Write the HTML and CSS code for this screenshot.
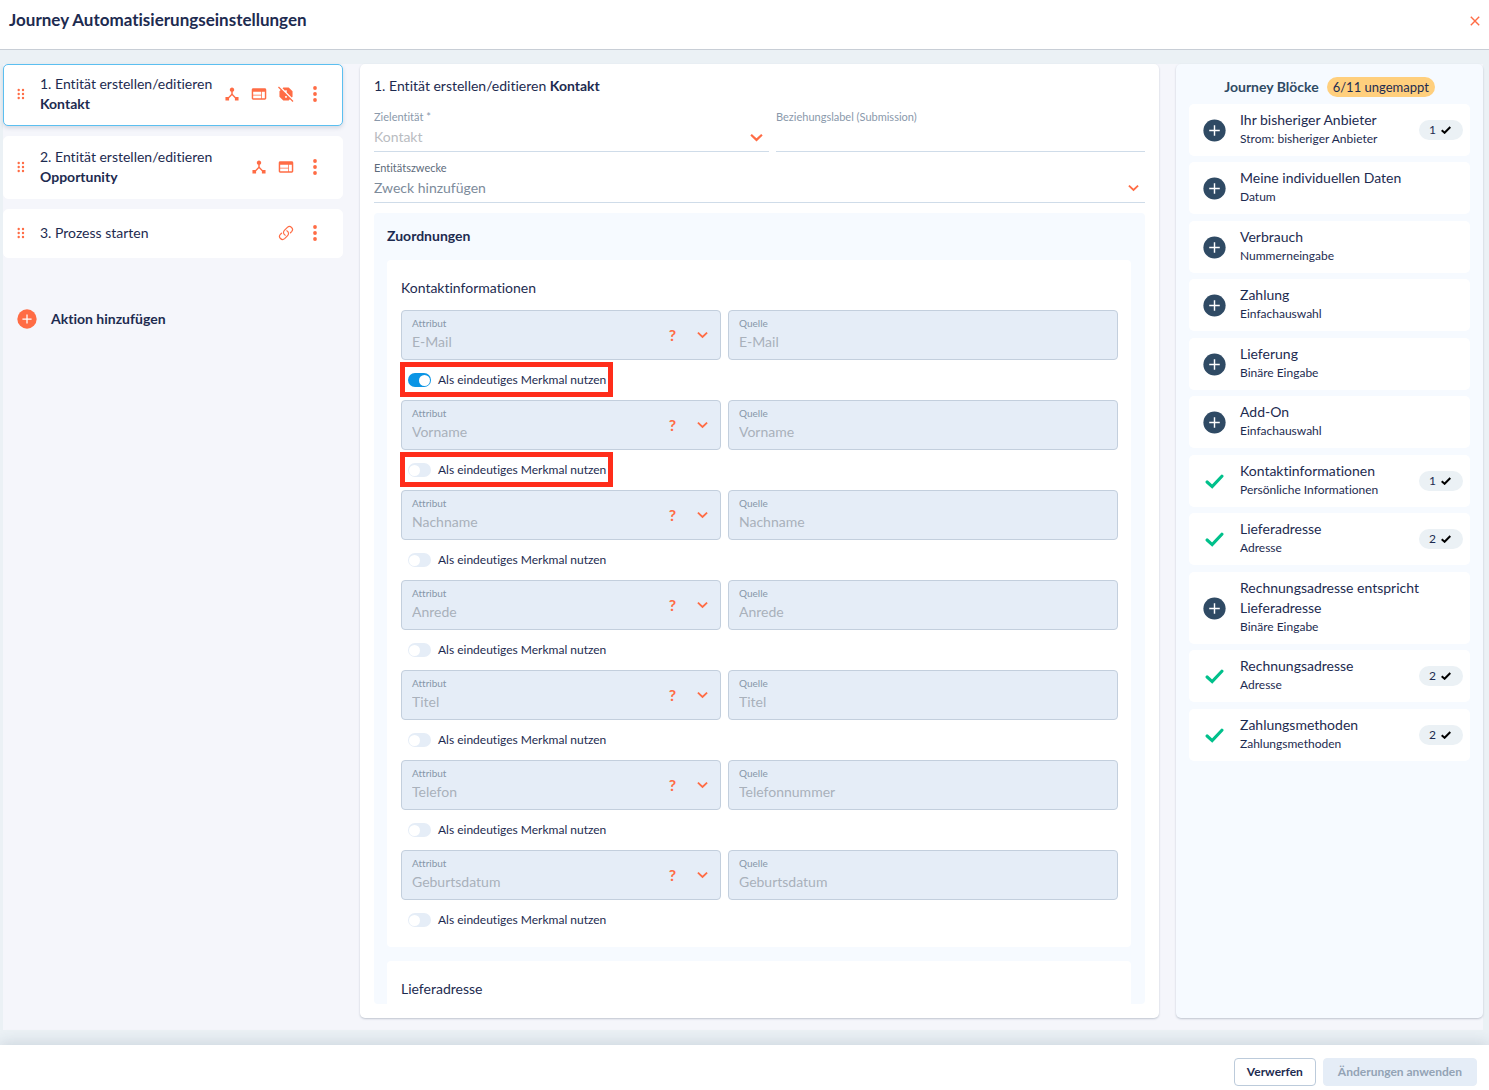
FILE: index.html
```html
<!DOCTYPE html>
<html lang="de">
<head>
<meta charset="utf-8">
<meta name="viewport" content="width=device-width, initial-scale=1">
<title>Journey Automatisierungseinstellungen</title>
<link rel="stylesheet" href="styles.css">
</head>
<body>
<svg class="sprite" aria-hidden="true">
  <symbol id="i-drag" viewBox="0 0 8 12"><g fill="currentColor"><circle cx="1.7" cy="2" r="1.2"/><circle cx="6" cy="2" r="1.2"/><circle cx="1.7" cy="6" r="1.2"/><circle cx="6" cy="6" r="1.2"/><circle cx="1.7" cy="10" r="1.2"/><circle cx="6" cy="10" r="1.2"/></g></symbol>
  <symbol id="i-dots" viewBox="0 0 4 16"><g fill="currentColor"><circle cx="2" cy="2" r="1.9"/><circle cx="2" cy="8" r="1.9"/><circle cx="2" cy="14" r="1.9"/></g></symbol>
  <symbol id="i-hub" viewBox="1 1 22 22"><path fill="currentColor" d="M17 16l-4-4V8.82C14.16 8.4 15 7.3 15 6c0-1.66-1.34-3-3-3S9 4.34 9 6c0 1.3.84 2.4 2 2.82V12l-4 4H3v5h5v-3.05l4-4.2 4 4.2V21h5v-5h-4z"/></symbol>
  <symbol id="i-web" viewBox="1 1 22 22"><path fill="currentColor" d="M20 4H4c-1.1 0-2 .9-2 2v12c0 1.1.9 2 2 2h16c1.1 0 2-.9 2-2V6c0-1.1-.9-2-2-2zm-5 14H4v-4h11v4zm0-5H4V9h11v4zm5 5h-4V9h4v9z"/></symbol>
  <symbol id="i-off" viewBox="1 1 22 22"><path fill="currentColor" d="M11 7h2v2.92l6.91 6.91 1.09-1.1V8.27L15.73 3H8.27L7.18 4.1 11 7.92V7zM22.27 21.73l-20-20L1 3l3.64 3.63L3 8.27v7.46L8.27 21h7.46l1.64-1.63L21 23l1.27-1.27zM12 17.3c-.72 0-1.3-.58-1.3-1.3s.58-1.3 1.3-1.3 1.3.58 1.3 1.3-.58 1.3-1.3 1.3z"/></symbol>
  <symbol id="i-link" viewBox="0 0 24 24"><path fill="none" stroke="currentColor" stroke-width="1.8" stroke-linecap="round" d="M13.19 8.69a4.5 4.5 0 0 1 1.24 7.24l-4.5 4.5a4.5 4.5 0 0 1-6.36-6.36l1.76-1.76m13.35-.62 1.75-1.76a4.5 4.5 0 0 0-6.36-6.36l-4.5 4.5a4.5 4.5 0 0 0 1.24 7.24"/></symbol>
  <symbol id="i-plus" viewBox="0 0 24 24"><circle cx="12" cy="12" r="11.6" fill="currentColor"/><path stroke="#fff" stroke-width="1.5" fill="none" d="M12 6.5v11M6.5 12h11"/></symbol>
  <symbol id="i-check" viewBox="0 0 18 14"><path fill="none" stroke="currentColor" stroke-width="3" stroke-linecap="round" d="M2 7.5 6.8 11.8 16 2"/></symbol>
  <symbol id="i-tick" viewBox="0 0 10 8"><path fill="none" stroke="currentColor" stroke-width="2" d="M.7 4.3 3.6 6.8 9.3 1"/></symbol>
  <symbol id="i-chevron" viewBox="0 0 12 8"><path fill="none" stroke="currentColor" stroke-width="2" d="M1 1.4 6 6.2 11 1.4"/></symbol>
  <symbol id="i-close" viewBox="0 0 10 10"><path fill="none" stroke="currentColor" stroke-width="1.4" d="M.8.8 9.2 9.2M9.2.8.8 9.2"/></symbol>
</svg>

<header class="topbar">
  <h1>Journey Automatisierungseinstellungen</h1>
  <button class="icon-btn" type="button" aria-label="Schließen"><svg class="close"><use href="#i-close"/></svg></button>
</header>

<main class="stage">
  <div class="columns">
    <nav class="actions" aria-label="Aktionen">
      <article class="action selected">
        <svg class="drag"><use href="#i-drag"/></svg>
        <p>1. Entität erstellen/editieren<br><b>Kontakt</b></p>
        <div class="tools">
          <svg class="tool"><use href="#i-hub"/></svg>
          <svg class="tool"><use href="#i-web"/></svg>
          <svg class="tool"><use href="#i-off"/></svg>
          <button class="icon-btn" type="button" aria-label="Menü"><svg class="dots"><use href="#i-dots"/></svg></button>
        </div>
      </article>
      <article class="action">
        <svg class="drag"><use href="#i-drag"/></svg>
        <p>2. Entität erstellen/editieren<br><b>Opportunity</b></p>
        <div class="tools">
          <svg class="tool"><use href="#i-hub"/></svg>
          <svg class="tool"><use href="#i-web"/></svg>
          <button class="icon-btn" type="button" aria-label="Menü"><svg class="dots"><use href="#i-dots"/></svg></button>
        </div>
      </article>
      <article class="action single">
        <svg class="drag"><use href="#i-drag"/></svg>
        <p>3. Prozess starten</p>
        <div class="tools">
          <svg class="tool"><use href="#i-link"/></svg>
          <button class="icon-btn" type="button" aria-label="Menü"><svg class="dots"><use href="#i-dots"/></svg></button>
        </div>
      </article>
      <button class="add" type="button"><svg class="add-icon"><use href="#i-plus"/></svg>Aktion hinzufügen</button>
    </nav>

    <section class="editor">
      <h2>1. Entität erstellen/editieren <b>Kontakt</b></h2>
      <div class="line-fields">
        <div class="line-field">
          <label for="target">Zielentität *</label>
          <div class="control"><select id="target" disabled><option>Kontakt</option></select><svg class="chevron big"><use href="#i-chevron"/></svg></div>
        </div>
        <div class="line-field">
          <label for="relation">Beziehungslabel (Submission)</label>
          <div class="control"><input id="relation" type="text" disabled></div>
        </div>
        <div class="line-field wide">
          <label for="purpose">Entitätszwecke</label>
          <div class="control"><input id="purpose" type="text" placeholder="Zweck hinzufügen"><svg class="chevron"><use href="#i-chevron"/></svg></div>
        </div>
      </div>

      <div class="mappings">
        <h3>Zuordnungen</h3>
        <div class="group">
          <h4>Kontaktinformationen</h4>
          <div class="map-row">
            <div class="box"><div class="field"><label for="a1">Attribut</label><select id="a1" disabled><option>E-Mail</option></select></div><button class="help" type="button">?</button><svg class="chevron"><use href="#i-chevron"/></svg></div>
            <div class="box"><div class="field"><label for="q1">Quelle</label><input id="q1" type="text" value="E-Mail" disabled></div></div>
          </div>
          <label class="unique marked"><input type="checkbox" role="switch" checked>Als eindeutiges Merkmal nutzen</label>
          <div class="map-row">
            <div class="box"><div class="field"><label for="a2">Attribut</label><select id="a2" disabled><option>Vorname</option></select></div><button class="help" type="button">?</button><svg class="chevron"><use href="#i-chevron"/></svg></div>
            <div class="box"><div class="field"><label for="q2">Quelle</label><input id="q2" type="text" value="Vorname" disabled></div></div>
          </div>
          <label class="unique marked"><input type="checkbox" role="switch">Als eindeutiges Merkmal nutzen</label>
          <div class="map-row">
            <div class="box"><div class="field"><label for="a3">Attribut</label><select id="a3" disabled><option>Nachname</option></select></div><button class="help" type="button">?</button><svg class="chevron"><use href="#i-chevron"/></svg></div>
            <div class="box"><div class="field"><label for="q3">Quelle</label><input id="q3" type="text" value="Nachname" disabled></div></div>
          </div>
          <label class="unique"><input type="checkbox" role="switch">Als eindeutiges Merkmal nutzen</label>
          <div class="map-row">
            <div class="box"><div class="field"><label for="a4">Attribut</label><select id="a4" disabled><option>Anrede</option></select></div><button class="help" type="button">?</button><svg class="chevron"><use href="#i-chevron"/></svg></div>
            <div class="box"><div class="field"><label for="q4">Quelle</label><input id="q4" type="text" value="Anrede" disabled></div></div>
          </div>
          <label class="unique"><input type="checkbox" role="switch">Als eindeutiges Merkmal nutzen</label>
          <div class="map-row">
            <div class="box"><div class="field"><label for="a5">Attribut</label><select id="a5" disabled><option>Titel</option></select></div><button class="help" type="button">?</button><svg class="chevron"><use href="#i-chevron"/></svg></div>
            <div class="box"><div class="field"><label for="q5">Quelle</label><input id="q5" type="text" value="Titel" disabled></div></div>
          </div>
          <label class="unique"><input type="checkbox" role="switch">Als eindeutiges Merkmal nutzen</label>
          <div class="map-row">
            <div class="box"><div class="field"><label for="a6">Attribut</label><select id="a6" disabled><option>Telefon</option></select></div><button class="help" type="button">?</button><svg class="chevron"><use href="#i-chevron"/></svg></div>
            <div class="box"><div class="field"><label for="q6">Quelle</label><input id="q6" type="text" value="Telefonnummer" disabled></div></div>
          </div>
          <label class="unique"><input type="checkbox" role="switch">Als eindeutiges Merkmal nutzen</label>
          <div class="map-row">
            <div class="box"><div class="field"><label for="a7">Attribut</label><select id="a7" disabled><option>Geburtsdatum</option></select></div><button class="help" type="button">?</button><svg class="chevron"><use href="#i-chevron"/></svg></div>
            <div class="box"><div class="field"><label for="q7">Quelle</label><input id="q7" type="text" value="Geburtsdatum" disabled></div></div>
          </div>
          <label class="unique"><input type="checkbox" role="switch">Als eindeutiges Merkmal nutzen</label>
        </div>
        <div class="group">
          <h4>Lieferadresse</h4>
        </div>
      </div>
    </section>

    <aside class="blocks">
      <div class="blocks-head"><h2>Journey Blöcke</h2><span class="badge">6/11 ungemappt</span></div>
      <ul>
        <li><svg class="state"><use href="#i-plus"/></svg><div class="info"><p>Ihr bisheriger Anbieter</p><small>Strom: bisheriger Anbieter</small></div><span class="pill">1<svg class="tick"><use href="#i-tick"/></svg></span></li>
        <li><svg class="state"><use href="#i-plus"/></svg><div class="info"><p>Meine individuellen Daten</p><small>Datum</small></div></li>
        <li><svg class="state"><use href="#i-plus"/></svg><div class="info"><p>Verbrauch</p><small>Nummerneingabe</small></div></li>
        <li><svg class="state"><use href="#i-plus"/></svg><div class="info"><p>Zahlung</p><small>Einfachauswahl</small></div></li>
        <li><svg class="state"><use href="#i-plus"/></svg><div class="info"><p>Lieferung</p><small>Binäre Eingabe</small></div></li>
        <li><svg class="state"><use href="#i-plus"/></svg><div class="info"><p>Add-On</p><small>Einfachauswahl</small></div></li>
        <li><svg class="state done"><use href="#i-check"/></svg><div class="info"><p>Kontaktinformationen</p><small>Persönliche Informationen</small></div><span class="pill">1<svg class="tick"><use href="#i-tick"/></svg></span></li>
        <li><svg class="state done"><use href="#i-check"/></svg><div class="info"><p>Lieferadresse</p><small>Adresse</small></div><span class="pill">2<svg class="tick"><use href="#i-tick"/></svg></span></li>
        <li><svg class="state"><use href="#i-plus"/></svg><div class="info"><p>Rechnungsadresse entspricht Lieferadresse</p><small>Binäre Eingabe</small></div></li>
        <li><svg class="state done"><use href="#i-check"/></svg><div class="info"><p>Rechnungsadresse</p><small>Adresse</small></div><span class="pill">2<svg class="tick"><use href="#i-tick"/></svg></span></li>
        <li><svg class="state done"><use href="#i-check"/></svg><div class="info"><p>Zahlungsmethoden</p><small>Zahlungsmethoden</small></div><span class="pill">2<svg class="tick"><use href="#i-tick"/></svg></span></li>
      </ul>
    </aside>
  </div>
</main>

<footer class="bottombar">
  <button class="btn" type="button">Verwerfen</button>
  <button class="btn primary" type="button" disabled>Änderungen anwenden</button>
</footer>
</body>
</html>
```
FILE: styles.css
```css
:root {
  --navy: #1d2b50;
  --slate: #2f4a64;
  --orange: #ff6c45;
  --field: #e5edf7;
  --line: #c3cfdd;
  --pale: #f6faff;
}

* { box-sizing: border-box; }

body {
  margin: 0;
  height: 100vh;
  display: flex;
  flex-direction: column;
  background: #fff;
  color: var(--navy);
  font: 14px/20px Lato, "Open Sans", sans-serif;
  font-variant-ligatures: none;
}

h1, h2, h3, h4, p, ul { margin: 0; padding: 0; }
button, input, select { font: inherit; color: inherit; margin: 0; }
svg { display: block; flex: none; }
.sprite { position: absolute; width: 0; height: 0; }

.icon-btn, .help, .add {
  border: 0;
  padding: 0;
  background: none;
  cursor: pointer;
}

.icon-btn, .help { color: var(--orange); }

/* Header */
.topbar {
  display: flex;
  align-items: flex-start;
  justify-content: space-between;
  min-height: 50px;
  padding: 8px 9px;
  border-bottom: 1px solid #c8ced6;
}

.topbar h1 { font-size: 17px; line-height: 24px; font-weight: 700; }
.topbar .icon-btn { padding-top: 8px; }
.close { width: 10px; height: 10px; }

/* Three-column work area */
.stage {
  flex: 1;
  min-height: 0;
  padding: 14px 6px 15px 3px;
  background: #ebf1f5;
  display: flex;
}

.columns {
  flex: 1;
  min-width: 0;
  display: grid;
  grid-template-columns: 340px minmax(0, 1fr) 307px;
  grid-template-rows: minmax(0, 1fr);
  gap: 17px;
  padding-bottom: 12px;
  background: #f5f6fb;
}

/* Action list */
.actions {
  display: flex;
  flex-direction: column;
  align-items: stretch;
  gap: 10px;
}

.action {
  display: flex;
  align-items: center;
  padding: 10px 25px 11px 13px;
  border: 1px solid #fff;
  border-radius: 5px;
  background: #fff;
}

.action.selected {
  padding-top: 9px;
  border-color: #5bbff0;
  box-shadow: 0 2px 4px rgba(30, 50, 80, .15);
}

.action p { flex: 1; }
.action.single { padding-top: 13px; padding-bottom: 14px; }
.drag { width: 8px; height: 12px; margin-right: 15px; color: var(--orange); }
.tools { display: flex; align-items: center; gap: 11px; color: var(--orange); }
.tool { width: 16px; height: 16px; }
.tools .icon-btn { padding-left: 8px; }
.dots { width: 4px; height: 16px; }

.add {
  display: flex;
  align-items: center;
  gap: 14px;
  margin-top: 41px;
  padding-left: 14px;
  font-weight: 700;
}

.add-icon { width: 20px; height: 20px; color: var(--orange); }

/* Editor */
.editor {
  display: flex;
  flex-direction: column;
  padding: 12px 14px 14px;
  border-radius: 5px;
  background: #fff;
  box-shadow: 0 1px 2px rgba(30, 50, 80, .25);
}

.editor h2 { font-size: 14px; line-height: 20px; font-weight: 400; }

.line-fields {
  display: grid;
  grid-template-columns: 395fr 369fr;
  gap: 8px 7px;
  margin-top: 13px;
}

.line-field {
  border-bottom: 1px solid #cfdce9;
  color: #8a99ab;
}

.line-field.wide { grid-column: 1 / -1; }
.line-field label { display: block; font-size: 11px; line-height: 16px; }
.wide label { color: #5d6b7b; }
.control { display: flex; align-items: center; padding: 2px 6px 4px 0; }

.control input, .control select, .field input, .field select {
  appearance: none;
  flex: 1;
  display: block;
  width: 100%;
  min-width: 0;
  height: 20px;
  padding: 0;
  border: 0;
  outline: 0;
  background: none;
  line-height: 20px;
  opacity: 1;
}

.control select { color: #b9bcc1; }
.control input::placeholder { color: #7d8b9b; opacity: 1; }
.chevron { width: 11px; height: 8px; color: var(--orange); }
.chevron.big { width: 13px; height: 9px; }

.mappings {
  flex: 1;
  min-height: 0;
  overflow: hidden;
  margin-top: 10px;
  padding: 13px 14px 0 13px;
  border-radius: 4px;
  background: var(--pale);
}

.mappings h3 { font-size: 14px; line-height: 20px; font-weight: 700; }

.group {
  margin-top: 14px;
  padding: 18px 13px 7px 14px;
  border-radius: 4px;
  background: #fff;
}

.group h4 { margin-bottom: 12px; font-size: 14px; line-height: 20px; font-weight: 400; }

.map-row { display: grid; grid-template-columns: 320fr 390fr; gap: 7px; }

.box {
  display: flex;
  align-items: center;
  height: 50px;
  padding: 0 12px 0 10px;
  border: 1px solid var(--line);
  border-radius: 4px;
  background: var(--field);
}

.field { flex: 1; min-width: 0; padding-bottom: 4px; color: #a9b1bb; }
.field label { display: block; font-size: 10px; line-height: 18px; color: #8797a9; }
.help { margin-right: 21px; font-size: 16px; line-height: 20px; font-weight: 700; }

.unique {
  position: relative;
  display: flex;
  align-items: center;
  gap: 7px;
  width: max-content;
  height: 40px;
  padding: 0 7px;
  font-size: 12px;
}

.unique input {
  appearance: none;
  display: flex;
  align-items: center;
  width: 23px;
  height: 14px;
  padding: 0 1px;
  border-radius: 7px;
  background: var(--field);
}

.unique input::before {
  content: "";
  width: 11px;
  height: 11px;
  border-radius: 50%;
  background: #fff;
}

.unique input:checked { justify-content: flex-end; background: #0b95e5; }

/* Highlight frame around a switch */
.marked::after {
  content: "";
  position: absolute;
  inset: 2px 0 3px -1px;
  border: 5px solid #ff2d1a;
  pointer-events: none;
}

/* Journey blocks */
.blocks {
  padding: 13px 13px 0;
  border-radius: 5px;
  background: var(--pale);
  box-shadow: 0 1px 2px rgba(30, 50, 80, .25);
}

.blocks-head {
  display: flex;
  align-items: center;
  justify-content: center;
  gap: 8px;
  margin-bottom: 7px;
}

.blocks h2 { font-size: 14px; line-height: 20px; font-weight: 700; color: var(--slate); }
.badge { padding: 0 6px; border-radius: 10px; background: #ffcf7d; font-size: 13px; }

.blocks li {
  display: flex;
  align-items: center;
  margin-bottom: 6px;
  padding: 0 7px 0 14px;
  border-radius: 5px;
  background: #fff;
}

.blocks li:nth-child(even) { margin-bottom: 7px; }
.state { width: 23px; height: 23px; margin-right: 14px; color: var(--slate); }
.state.done { padding: 2px; color: #00c08b; }
.info { flex: 1; padding: 6px 0 9px; }
.info small { display: block; font-size: 12px; line-height: 17px; }

.pill {
  display: flex;
  align-items: center;
  gap: 5px;
  padding: 0 12px 0 10px;
  border-radius: 10px;
  background: #ebf1f5;
  font-size: 12px;
}

.tick { width: 10px; height: 8px; color: #000; }

/* Footer */
.bottombar {
  position: relative;
  display: flex;
  justify-content: flex-end;
  gap: 7px;
  padding: 13px 12px 4px;
  background: #fff;
  box-shadow: 0 -2px 14px rgba(40, 60, 100, .16);
}

.btn {
  height: 28px;
  padding: 0 12px 1px;
  border: 1px solid #bccbdb;
  border-radius: 4px;
  background: #fff;
  font-size: 12px;
  font-weight: 700;
}

.btn.primary { padding: 0 14px 1px; border-color: var(--field); background: var(--field); color: #93a3b5; }
```
